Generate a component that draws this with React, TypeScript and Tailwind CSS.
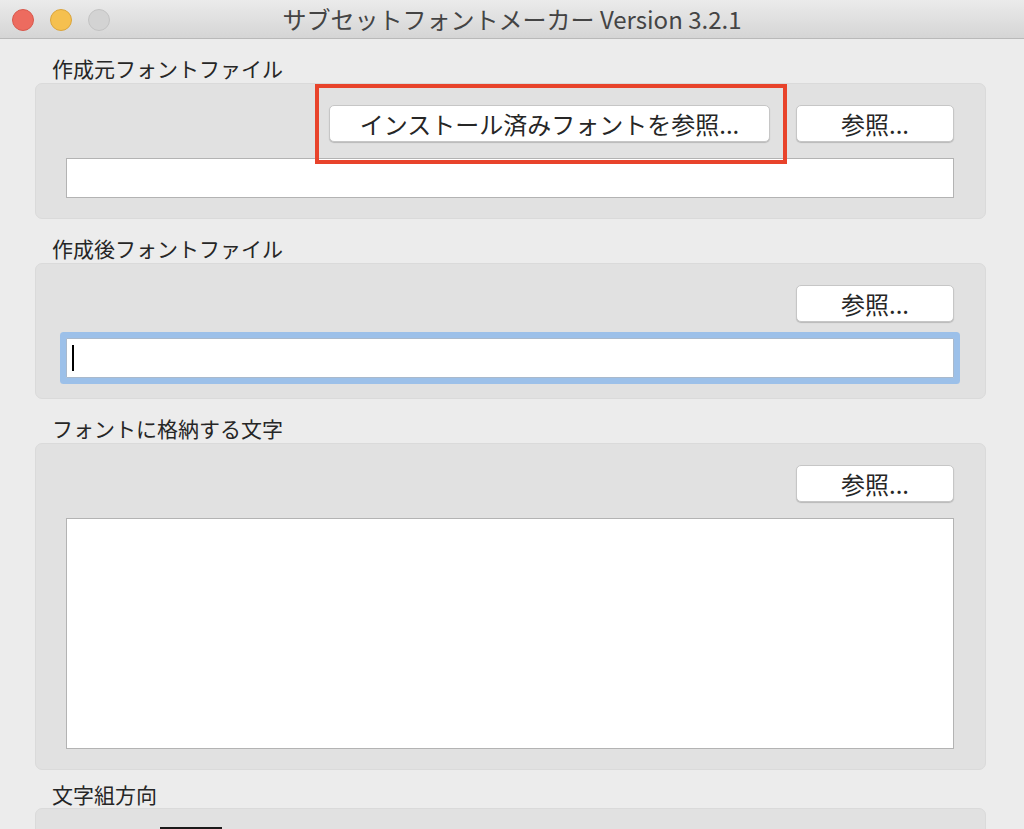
import React from 'react';

const font = { fontFamily: '"Noto Sans CJK JP", "Noto Sans", sans-serif' };

function MacButton({ children, className = '' }: { children: React.ReactNode; className?: string }) {
  return (
    <button
      type="button"
      className={`h-[37px] rounded-[5px] border border-[#c6c6c6] bg-white text-[24px] leading-none text-[#262626] shadow-[0_1px_1px_rgba(0,0,0,0.18)] ${className}`}
    >
      {children}
    </button>
  );
}

function SectionLabel({ text, className = '' }: { text: string; className?: string }) {
  return (
    <div className={`pl-[52px] h-[28px] text-[21px] leading-[28px] text-[#262626] ${className}`}>{text}</div>
  );
}

function Panel({ children, className = '' }: { children: React.ReactNode; className?: string }) {
  return (
    <div
      className={`relative ml-[35px] w-[951px] rounded-[7px] border border-[#dadada] bg-[#e1e1e1] pl-[30px] pr-[31px] ${className}`}
    >
      {children}
    </div>
  );
}

export default function App() {
  return (
    <div className="w-[1024px] h-[829px] overflow-hidden bg-[#ececec]" style={font}>
      {/* title bar */}
      <div className="relative flex h-[39px] items-center justify-center border-b border-[#b9b9b9] bg-gradient-to-b from-[#ebebeb] to-[#d5d5d5]">
        <div className="absolute left-[12px] top-[9px] flex gap-[16px]">
          <span className="h-[22px] w-[22px] rounded-full border border-[#d8584c] bg-[#ed6b5f]" />
          <span className="h-[22px] w-[22px] rounded-full border border-[#dba53c] bg-[#f5c04f]" />
          <span className="h-[22px] w-[22px] rounded-full border border-[#c3c3c3] bg-[#d3d3d3]" />
        </div>
        <span className="pl-[0px] text-[24px] leading-none text-[#444444]">サブセットフォントメーカー Version 3.2.1</span>
      </div>

      {/* 作成元 */}
      <SectionLabel text="作成元フォントファイル" className="mt-[15px] mb-[1px]" />
      <Panel className="h-[136px] pt-[21px]">
        <div className="flex justify-end gap-[26px]">
          <MacButton className="w-[441px]">インストール済みフォントを参照...</MacButton>
          <MacButton className="w-[158px]">参照...</MacButton>
        </div>
        <div className="mt-[16px] h-[40px] border border-[#b3b3b3] bg-white" />
        <div className="pointer-events-none absolute left-[279px] top-[0px] h-[80px] w-[472px] border-[4px] border-[#e8432b]" />
      </Panel>

      {/* 作成後 */}
      <SectionLabel text="作成後フォントファイル" className="mt-[15px] mb-[1px]" />
      <Panel className="h-[136px] pt-[21px]">
        <div className="flex justify-end">
          <MacButton className="w-[158px]">参照...</MacButton>
        </div>
        <div className="mt-[16px] flex h-[40px] items-center rounded-[1px] border border-[#a9b9cc] bg-white pl-[5px] shadow-[0_0_0_6px_#9cc0e9]">
          <span className="h-[26px] w-[2px] bg-black" />
        </div>
      </Panel>

      {/* 格納する文字 */}
      <SectionLabel text="フォントに格納する文字" className="mt-[15px] mb-[1px]" />
      <Panel className="h-[327px] pt-[21px]">
        <div className="flex justify-end">
          <MacButton className="w-[158px]">参照...</MacButton>
        </div>
        <div className="mt-[16px] h-[231px] border border-[#b3b3b3] bg-white" />
      </Panel>

      {/* 文字組方向 */}
      <SectionLabel text="文字組方向" className="mt-[10px] mb-[0px]" />
      <Panel className="h-[60px]">
        <div className="ml-[94px] mt-[18px] h-[8px] w-[62px] bg-[#1a1a1a]" />
      </Panel>
    </div>
  );
}
